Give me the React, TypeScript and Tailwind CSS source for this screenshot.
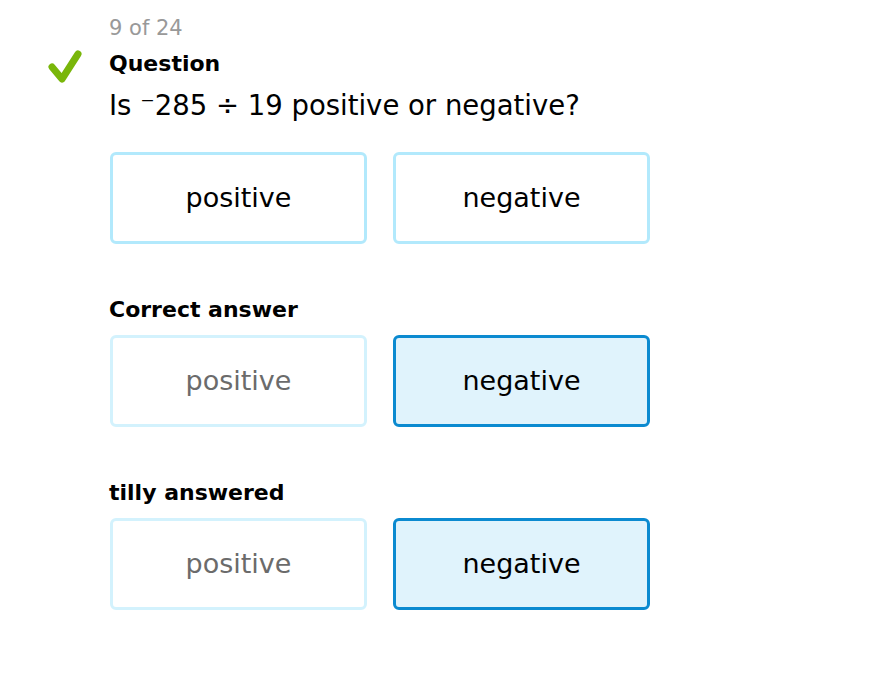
import React from "react";

type Choice = { label: string; state: "idle" | "faded" | "picked" };

function ChoiceCard({ label, state }: Choice) {
  const styles = {
    idle: "border-[#b2e9fc] bg-white text-black",
    faded: "border-[#d3f2fd] bg-white text-[#6b6b6b]",
    picked: "border-[#0b8ad0] bg-[#e0f3fc] text-black",
  }[state];
  return (
    <div className={`w-[257px] h-[92px] rounded-[6px] border-[3px] flex items-center justify-center text-[27px] ${styles}`}>
      {label}
    </div>
  );
}

function CheckMark() {
  return (
    <svg width="40" height="40" viewBox="0 0 40 40">
      <polyline
        points="6,20 16,32 32,7"
        fill="none"
        stroke="#79b60a"
        strokeWidth="7"
        strokeLinecap="round"
        strokeLinejoin="round"
      />
    </svg>
  );
}

function Row({ picked }: { picked: "none" | "negative" }) {
  const faded = picked !== "none";
  return (
    <div className="flex gap-[26px] ml-px">
      <ChoiceCard label="positive" state={faded ? "faded" : "idle"} />
      <ChoiceCard label="negative" state={faded ? "picked" : "idle"} />
    </div>
  );
}

export default function App() {
  return (
    <div className="w-[881px] h-[682px] bg-white font-['DejaVu_Sans',sans-serif] text-black relative">
      <div className="absolute left-[46px] top-[47px]">
        <CheckMark />
      </div>
      <div className="pl-[109px] pt-[15px]">
        <div className="text-[21px] leading-[26px] text-[#999999]">9 of 24</div>
        <div className="mt-[10px] text-[22px] leading-[26px] font-bold">Question</div>
        <div className="mt-[12px] text-[27.5px] leading-[32px]">Is ⁻285 ÷ 19 positive or negative?</div>
        <div className="mt-[31px]">
          <Row picked="none" />
        </div>
        <div className="mt-[53px] text-[22px] leading-[26px] font-bold">Correct answer</div>
        <div className="mt-[12px]">
          <Row picked="negative" />
        </div>
        <div className="mt-[53px] text-[22px] leading-[26px] font-bold">tilly answered</div>
        <div className="mt-[12px]">
          <Row picked="negative" />
        </div>
      </div>
    </div>
  );
}
